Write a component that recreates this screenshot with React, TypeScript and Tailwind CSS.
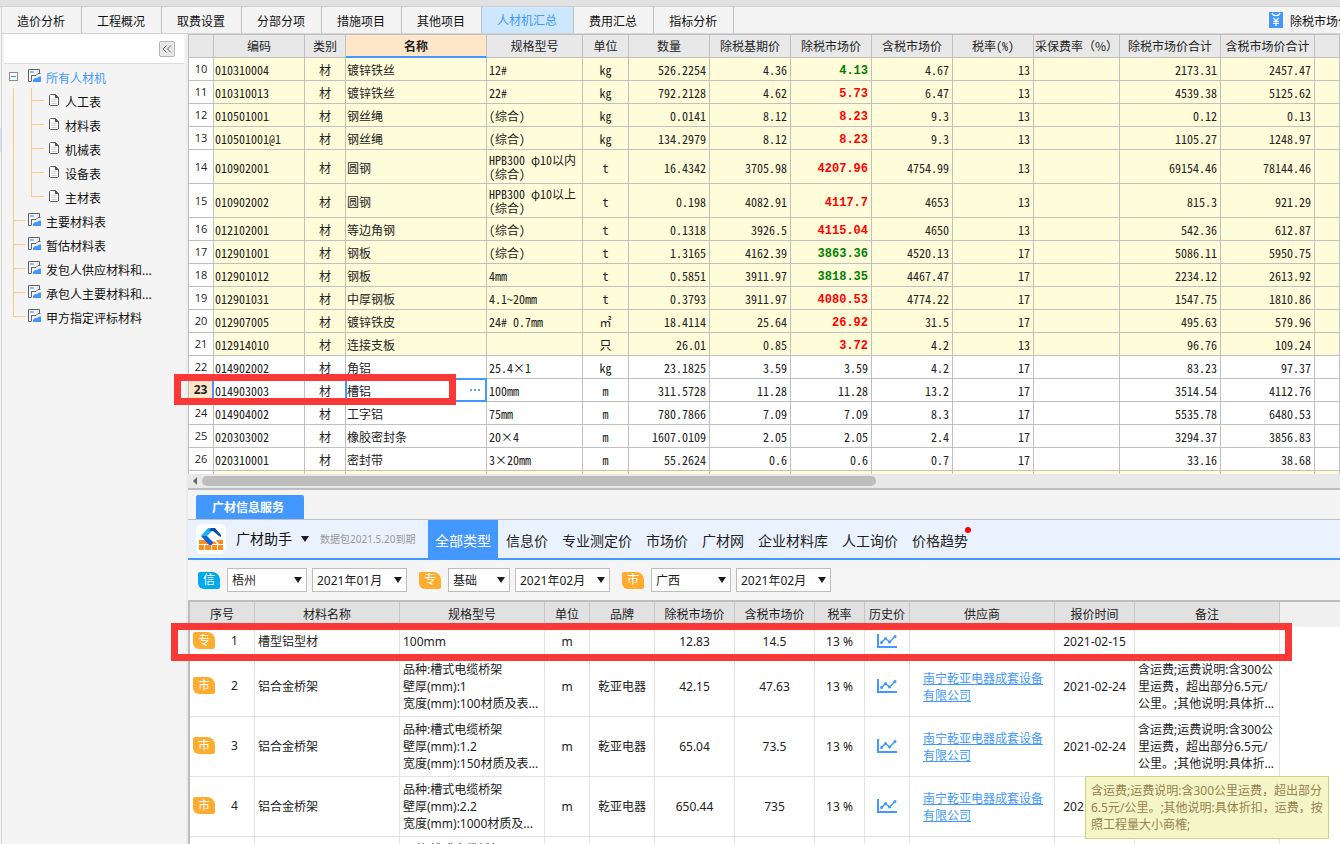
import type { ReactNode } from 'react'

const TABS = ['造价分析', '工程概况', '取费设置', '分部分项', '措施项目', '其他项目', '人材机汇总', '费用汇总', '指标分析']

const SUB_ITEMS = ['人工表', '材料表', '机械表', '设备表', '主材表']
const TREE_ITEMS = ['主要材料表', '暂估材料表', '发包人供应材料和...', '承包人主要材料和...', '甲方指定评标材料']

type Trend = 'up' | 'down' | ''

interface Material {
  no: number
  code: string
  name: string
  spec: string
  unit: string
  qty: string
  base: string
  market: string
  trend: Trend
  taxed: string
  rate: string
  total: string
  taxedTotal: string
}

function material(
  no: number, code: string, name: string, spec: string, unit: string, qty: string, base: string,
  market: string, trend: Trend, taxed: string, rate: string, total: string, taxedTotal: string,
): Material {
  return { no, code, name, spec, unit, qty, base, market, trend, taxed, rate, total, taxedTotal }
}

const MATERIALS: Material[] = [
  material(10, '010310004', '镀锌铁丝', '12#', 'kg', '526.2254', '4.36', '4.13', 'down', '4.67', '13', '2173.31', '2457.47'),
  material(11, '010310013', '镀锌铁丝', '22#', 'kg', '792.2128', '4.62', '5.73', 'up', '6.47', '13', '4539.38', '5125.62'),
  material(12, '010501001', '钢丝绳', '(综合)', 'kg', '0.0141', '8.12', '8.23', 'up', '9.3', '13', '0.12', '0.13'),
  material(13, '010501001@1', '钢丝绳', '(综合)', 'kg', '134.2979', '8.12', '8.23', 'up', '9.3', '13', '1105.27', '1248.97'),
  material(14, '010902001', '圆钢', 'HPB300 φ10以内\n(综合)', 't', '16.4342', '3705.98', '4207.96', 'up', '4754.99', '13', '69154.46', '78144.46'),
  material(15, '010902002', '圆钢', 'HPB300 φ10以上\n(综合)', 't', '0.198', '4082.91', '4117.7', 'up', '4653', '13', '815.3', '921.29'),
  material(16, '012102001', '等边角钢', '(综合)', 't', '0.1318', '3926.5', '4115.04', 'up', '4650', '13', '542.36', '612.87'),
  material(17, '012901001', '钢板', '(综合)', 't', '1.3165', '4162.39', '3863.36', 'down', '4520.13', '17', '5086.11', '5950.75'),
  material(18, '012901012', '钢板', '4mm', 't', '0.5851', '3911.97', '3818.35', 'down', '4467.47', '17', '2234.12', '2613.92'),
  material(19, '012901031', '中厚钢板', '4.1~20mm', 't', '0.3793', '3911.97', '4080.53', 'up', '4774.22', '17', '1547.75', '1810.86'),
  material(20, '012907005', '镀锌铁皮', '24# 0.7mm', '㎡', '18.4114', '25.64', '26.92', 'up', '31.5', '17', '495.63', '579.96'),
  material(21, '012914010', '连接支板', '', '只', '26.01', '0.85', '3.72', 'up', '4.2', '13', '96.76', '109.24'),
  material(22, '014902002', '角铝', '25.4×1', 'kg', '23.1825', '3.59', '3.59', '', '4.2', '17', '83.23', '97.37'),
  material(23, '014903003', '槽铝', '100mm', 'm', '311.5728', '11.28', '11.28', '', '13.2', '17', '3514.54', '4112.76'),
  material(24, '014904002', '工字铝', '75mm', 'm', '780.7866', '7.09', '7.09', '', '8.3', '17', '5535.78', '6480.53'),
  material(25, '020303002', '橡胶密封条', '20×4', 'm', '1607.0109', '2.05', '2.05', '', '2.4', '17', '3294.37', '3856.83'),
  material(26, '020310001', '密封带', '3×20mm', 'm', '55.2624', '0.6', '0.6', '', '0.7', '17', '33.16', '38.68'),
]

const SELECTED_NO = 23

const SERVICE_TABS = ['全部类型', '信息价', '专业测定价', '市场价', '广材网', '企业材料库', '人工询价', '价格趋势']

const SUPPLIER = '南宁乾亚电器成套设备有限公司'
const NOTE = ['含运费;运费说明:含300公', '里运费，超出部分6.5元/', '公里。;其他说明:具体折...']

const QUOTES = [
  { no: 1, tag: '专', name: '槽型铝型材', spec: ['100mm'], brand: '', price: '12.83', taxed: '14.5', supplier: '', date: '2021-02-15', note: [] },
  { no: 2, tag: '市', name: '铝合金桥架', spec: ['品种:槽式电缆桥架', '壁厚(mm):1', '宽度(mm):100材质及表...'], brand: '乾亚电器', price: '42.15', taxed: '47.63', supplier: SUPPLIER, date: '2021-02-24', note: NOTE },
  { no: 3, tag: '市', name: '铝合金桥架', spec: ['品种:槽式电缆桥架', '壁厚(mm):1.2', '宽度(mm):150材质及表...'], brand: '乾亚电器', price: '65.04', taxed: '73.5', supplier: SUPPLIER, date: '2021-02-24', note: NOTE },
  { no: 4, tag: '市', name: '铝合金桥架', spec: ['品种:槽式电缆桥架', '壁厚(mm):2.2', '宽度(mm):1000材质及...'], brand: '乾亚电器', price: '650.44', taxed: '735', supplier: SUPPLIER, date: '2021-02-24', note: [] },
]

function SheetIcon() {
  return (
    <svg width="13" height="14" viewBox="0 0 13 14" fill="none" className="shrink-0">
      <path d="M11.500 4V.500H.500v12H3" stroke="#5c6068" />
      <path d="M2 2h4v2H2z" fill="#8fc3fb" />
      <path d="M12.500 4.500H10l-2 2H3.500v6" stroke="#5c6068" />
      <path d="M5 13v-2l2-2h2l2-1.500h2V13z" fill="#4398ff" />
    </svg>
  )
}

function PageIcon() {
  return (
    <svg width="10" height="12" viewBox="0 0 10 12" fill="none" className="shrink-0">
      <path d="M1.500.500h5l3 3v7l-1 1h-7l-1-1v-9z" fill="#fff" stroke="#55585e" />
      <path d="M6 0v4h4z" fill="#55585e" />
      <path d="M2.500 5.500h5M2.500 7.500h5M2.500 9.500h5" stroke="#c9c9c9" />
    </svg>
  )
}

function ChartIcon() {
  return (
    <svg width="20" height="15" viewBox="0 0 20 15" fill="none" stroke="#4398ff">
      <path d="M1 0v13h19" strokeWidth="2" />
      <path d="M4.500 8.500l4-4 4 3.500 5.500-5.500" strokeWidth="1.500" />
      <g fill="#4398ff" stroke="none">
        <circle cx="4.500" cy="8.500" r="1.500" />
        <circle cx="8.500" cy="4.500" r="1.500" />
        <circle cx="12.500" cy="8" r="1.500" />
        <circle cx="18" cy="2.500" r="1.500" />
      </g>
    </svg>
  )
}

function Logo() {
  return (
    <svg width="30" height="30" viewBox="0 0 30 30" className="shrink-0 rounded-md bg-white">
      <path d="M3 16h6l4 4H3zM15 20l3-3 3 3zM20 16h7v4h-4z" fill="#ff8a1e" />
      <path d="M3 21h5v5H3zM9 21h6v5H9zM16 21h5v5h-5zM22 21h5v5h-5z" fill="#ff8a1e" />
      <path d="M12 4h7l-3 3-5 5H5z" fill="#1fb0fa" />
      <path d="M5 12h6l6 6-1 3h-3z" fill="#0c62d8" />
      <path d="M15 4h4l6 7v2l-2-1-6-5h-4z" fill="#0a4cab" />
    </svg>
  )
}

function Caret() {
  return (
    <svg width="8" height="6" viewBox="0 0 8 6" className="shrink-0">
      <path d="M0 0h8L4 6z" fill="#1c1c1c" />
    </svg>
  )
}

function Badge({ label, color = 'bg-[#ffab2e]' }: { label: string; color?: string }) {
  return (
    <span className={`flex h-[17px] w-[22px] shrink-0 items-center justify-center rounded-tl-xs rounded-tr-lg rounded-br-xs rounded-bl-md text-xs leading-none text-white ${color}`}>
      {label}
    </span>
  )
}

function Picker({ label, value, width }: { label: string; value: string; width: string }) {
  return (
    <span className={`relative flex items-center ${width}`}>
      <select aria-label={label} className="h-6 w-full appearance-none border border-[#bdbdbd] bg-white pt-px pl-1 text-xs text-[#1c1c1c]">
        <option>{value}</option>
      </select>
      <span className="pointer-events-none absolute right-[5px]">
        <Caret />
      </span>
    </span>
  )
}

function Branch({ last = false, children }: { last?: boolean; children: ReactNode }) {
  return (
    <li className="flex h-6 items-center">
      <span className="flex w-[13px] shrink-0 flex-col self-stretch">
        <span className="h-[13px] border-b border-l border-[#ffc880]" />
        {!last && <span className="flex-1 border-l border-[#ffc880]" />}
      </span>
      {children}
    </li>
  )
}

function Sidebar() {
  return (
    <aside className="w-[186px] shrink-0 border-r-2 border-[#ececec] bg-[#f4f4f4]">
      <div className="mx-[2px] flex h-[30px] items-center justify-end border-b border-[#dcdcdc] bg-white pr-[9px]">
        <button aria-label="收起" className="flex size-4 items-center justify-center rounded-xs border border-[#b5b5b5] bg-[#e8e8e8]">
          <svg width="10" height="8" viewBox="0 0 10 8" fill="none" stroke="#666">
            <path d="M4.500.500L1 4l3.500 3.500M9 .500L5.500 4 9 7.500" />
          </svg>
        </button>
      </div>
      <div className="flex h-6 items-center pl-[7px]">
        <button aria-label="折叠" className="flex size-[9px] items-center justify-center border border-[#8c8c8c] bg-white">
          <span className="h-px w-[5px] bg-[#2aa0d8]" />
        </button>
        <span className="ml-[10px]">
          <SheetIcon />
        </span>
        <a href="#all" className="ml-[5px] pt-[6px] text-[#4398ff]">所有人材机</a>
      </div>
      <ul className="pl-[11px]">
        <li className="border-l border-[#ffc880] pl-[17px]">
          <ul>
            {SUB_ITEMS.map((item, i) => (
              <Branch key={item} last={i === SUB_ITEMS.length - 1}>
                <span className="ml-[5px]">
                  <PageIcon />
                </span>
                <a href="#sheet" className="ml-[6px] pt-[6px]">{item}</a>
              </Branch>
            ))}
          </ul>
        </li>
        {TREE_ITEMS.map((item, i) => (
          <Branch key={item} last={i === TREE_ITEMS.length - 1}>
            <span className="ml-[2px]">
              <SheetIcon />
            </span>
            <a href="#sheet" className="ml-[5px] pt-[6px] whitespace-nowrap">{item}</a>
          </Branch>
        ))}
      </ul>
    </aside>
  )
}

const headCell = 'h-6 border-t border-r border-b border-[#c0c0c0] bg-[#e8e8e8] p-0 text-center font-normal'

function MaterialTable() {
  return (
    <table className="w-full table-fixed border-separate border-spacing-0 border-l border-[#c0c0c0] font-['Noto_Sans_CJK_SC',sans-serif] leading-[14px] whitespace-nowrap text-[#222] [font-feature-settings:'hwid']">
      <colgroup>
        <col className="w-[25px]" />
        <col className="w-[91px]" />
        <col className="w-[41px]" />
        <col className="w-[141px]" />
        <col className="w-[96px]" />
        <col className="w-[46px]" />
        <col className="w-[81px]" />
        <col className="w-[81px]" />
        <col className="w-[81px]" />
        <col className="w-[81px]" />
        <col className="w-[81px]" />
        <col className="w-[86px]" />
        <col className="w-[101px]" />
        <col className="w-[94px]" />
        <col />
      </colgroup>
      <thead>
        <tr>
          <th className={headCell} />
          <th className={headCell}>编码</th>
          <th className={headCell}>类别</th>
          <th className="h-6 border-t border-r border-b-2 border-t-[#c0c0c0] border-r-[#c0c0c0] border-b-[#4398ff] bg-[#ffe6c8] p-0 text-center font-bold">名称</th>
          <th className={headCell}>规格型号</th>
          <th className={headCell}>单位</th>
          <th className={headCell}>数量</th>
          <th className={headCell}>除税基期价</th>
          <th className={headCell}>除税市场价</th>
          <th className={headCell}>含税市场价</th>
          <th className={headCell}>税率(%)</th>
          <th className={`${headCell} [font-feature-settings:normal]`}>采保费率（%）</th>
          <th className={headCell}>除税市场价合计</th>
          <th className={headCell}>含税市场价合计</th>
          <th className={headCell} />
        </tr>
      </thead>
      <tbody>
        {MATERIALS.map((m) => {
          const bg = m.no < 22 ? 'bg-[#fffcd9]' : 'bg-white'
          const twoLines = m.spec.includes('\n')
          const base = `border-r border-b border-[#c0c0c0] ${bg}`
          const cell = `${base} px-0 pt-[2px] pb-0`
          const left = `${base} pt-[2px] pr-0 pb-0 pl-px text-left whitespace-pre`
          const right = `${base} pt-[2px] pr-[3px] pb-0 pl-0 text-right`
          const tone = m.trend === 'up' ? 'text-[#ff0000]' : 'text-[#008000]'
          const selected = m.no === SELECTED_NO
          return (
            <tr key={m.no} className={twoLines ? 'h-[34px]' : 'h-[23px]'}>
              <th
                className={
                  selected
                    ? "border-r-2 border-b border-r-[#4398ff] border-b-[#c0c0c0] bg-[#ffe6c8] p-0 font-['Open_Sans',sans-serif] font-bold"
                    : "border-r border-b border-[#c0c0c0] bg-white p-0 font-['Open_Sans',sans-serif] text-[11px] font-normal"
                }
              >
                {m.no}
              </th>
              <td className={left}>{m.code}</td>
              <td className={`${cell} text-center`}>材</td>
              {selected ? (
                <td className={`${left} relative`}>
                  {m.name}
                  <button aria-label="选择" className="absolute -inset-px flex items-center justify-end border-2 border-[#4398ff] pr-[3px]">
                    <svg width="12" height="2" viewBox="0 0 12 2" fill="#6aa3dc">
                      <path d="M0 0h2v2H0zM4 0h2v2H4zM8 0h2v2H8z" />
                    </svg>
                  </button>
                </td>
              ) : (
                <td className={left}>{m.name}</td>
              )}
              <td className={twoLines ? `${base} py-0 pr-0 pl-[2px] text-left whitespace-pre` : `${base} pt-[2px] pr-0 pb-0 pl-[2px] text-left whitespace-pre`}>{m.spec}</td>
              <td className={`${cell} text-center`}>{m.unit}</td>
              <td className={right}>{m.qty}</td>
              <td className={right}>{m.base}</td>
              <td className={right}>
                {m.trend ? <b className={`font-['Liberation_Mono',monospace] ${tone}`}>{m.market}</b> : m.market}
              </td>
              <td className={right}>{m.taxed}</td>
              <td className={right}>{m.rate}</td>
              <td className={cell} />
              <td className={right}>{m.total}</td>
              <td className={right}>{m.taxedTotal}</td>
              <td className={cell} />
            </tr>
          )
        })}
        <tr className="h-[23px]">
          <th className="border-r border-[#c0c0c0] bg-white" />
          {Array.from({ length: 14 }, (_, i) => (
            <td key={i} className="border-r border-[#c0c0c0] bg-[#fffcd9]" />
          ))}
        </tr>
      </tbody>
    </table>
  )
}

const quoteHead = 'h-[25px] border-r border-[#c6c6c6] bg-[#e1e1e1] p-0 text-center font-normal'
const quoteCell = 'border-r border-b border-[#e3e3e3] p-0 text-center'

function QuoteTable() {
  return (
    <table className="w-full table-fixed border-separate border-spacing-0 border-t-2 border-l-2 border-[#bdbdbd] bg-white leading-[17px] whitespace-nowrap text-[#222]">
      <colgroup>
        <col className="w-[65px]" />
        <col className="w-[145px]" />
        <col className="w-[145px]" />
        <col className="w-[45px]" />
        <col className="w-[65px]" />
        <col className="w-[80px]" />
        <col className="w-[80px]" />
        <col className="w-[50px]" />
        <col className="w-[45px]" />
        <col className="w-[145px]" />
        <col className="w-[80px]" />
        <col className="w-[145px]" />
        <col />
      </colgroup>
      <thead>
        <tr>
          {['序号', '材料名称', '规格型号', '单位', '品牌', '除税市场价', '含税市场价', '税率', '历史价', '供应商', '报价时间', '备注'].map((h) => (
            <th key={h} className={quoteHead}>{h}</th>
          ))}
          <th className="bg-[#f0f0f0] p-0" />
        </tr>
      </thead>
      <tbody>
        {QUOTES.map((q) => (
          <tr key={q.no} className={q.no === 1 ? 'h-[30px]' : 'h-[60px]'}>
            <td className={quoteCell}>
              <div className="flex items-center pb-[2px] pl-[3px]">
                <Badge label={q.tag} />
                <span className="flex-1">{q.no}</span>
              </div>
            </td>
            <td className={`${quoteCell} pl-[3px] text-left`}>{q.name}</td>
            <td className={q.no === 1 ? `${quoteCell} pl-[3px] text-left` : `${quoteCell} pt-1 pl-[3px] text-left align-top`}>
              {q.spec.map((line) => (
                <div key={line}>{line}</div>
              ))}
            </td>
            <td className={quoteCell}>m</td>
            <td className={quoteCell}>{q.brand}</td>
            <td className={quoteCell}>{q.price}</td>
            <td className={quoteCell}>{q.taxed}</td>
            <td className={quoteCell}>13 %</td>
            <td className={quoteCell}>
              <button aria-label="历史价" className="block pl-3">
                <ChartIcon />
              </button>
            </td>
            <td className={`${quoteCell} pl-[13px] text-left whitespace-normal`}>
              {q.supplier && (
                <a href="#supplier" className="block w-[120px] text-[#4398ff] underline">{q.supplier}</a>
              )}
            </td>
            <td className={quoteCell}>{q.date}</td>
            <td className={`${quoteCell} pt-1 pl-[3px] text-left align-top`}>
              {q.note.map((line) => (
                <div key={line}>{line}</div>
              ))}
            </td>
            <td />
          </tr>
        ))}
        <tr className="h-[60px]">
          <td className={quoteCell} />
          <td className={quoteCell} />
          <td className={`${quoteCell} pt-1 pl-[3px] text-left align-top`}>品种:槽式电缆桥架</td>
          {Array.from({ length: 9 }, (_, i) => (
            <td key={i} className={quoteCell} />
          ))}
          <td />
        </tr>
      </tbody>
    </table>
  )
}

function ServicePanel() {
  return (
    <section className="flex min-h-0 flex-1 flex-col">
      <div className="flex h-[30px] shrink-0 items-end border-b border-[#c0c0c0] bg-[#f4f4f4] pl-2">
        <button className="h-6 w-[108px] rounded-t-xs bg-[#4398ff] pt-px pr-1 font-bold text-white">广材信息服务</button>
      </div>
      <div className="flex h-10 shrink-0 items-center border-b-2 border-[#4398ff] bg-[#ebf2ff] pl-2 text-sm text-[#222]">
        <Logo />
        <button className="ml-[10px] flex items-center gap-[9px] whitespace-nowrap text-[#111]">
          广材助手
          <Caret />
        </button>
        <span className="ml-[11px] w-[108px] shrink-0 text-[10px] whitespace-nowrap text-[#999]">数据包2021.5.20到期</span>
        <nav className="flex self-stretch">
          {SERVICE_TABS.map((tab, i) => (
            <button
              key={tab}
              className={i === 0 ? 'mr-px bg-[#4398ff] px-[7px] pt-1 whitespace-nowrap text-white' : 'relative px-[7px] pt-1 whitespace-nowrap'}
            >
              {tab}
              {tab === '价格趋势' && <span className="absolute top-[7px] right-[4px] size-[6px] rounded-full bg-[#ff0000]" />}
            </button>
          ))}
        </nav>
      </div>
      <div className="flex h-10 shrink-0 items-center bg-[#f5f5f5] pl-[10px]">
        <Badge label="信" color="bg-[#00a8f0]" />
        <div className="ml-[7px] flex gap-[5px]">
          <Picker label="信息价地区" value="梧州" width="w-[80px]" />
          <Picker label="信息价期次" value="2021年01月" width="w-[95px]" />
        </div>
        <div className="ml-3 flex items-center gap-[7px]">
          <Badge label="专" />
          <div className="flex gap-[5px]">
            <Picker label="测定价类别" value="基础" width="w-[62px]" />
            <Picker label="测定价期次" value="2021年02月" width="w-[95px]" />
          </div>
        </div>
        <div className="ml-3 flex items-center gap-[7px]">
          <Badge label="市" />
          <div className="flex gap-[5px]">
            <Picker label="市场价地区" value="广西" width="w-[80px]" />
            <Picker label="市场价期次" value="2021年02月" width="w-[95px]" />
          </div>
        </div>
      </div>
      <div className="relative min-h-0 flex-1">
        <div className="h-full overflow-hidden bg-white">
          <QuoteTable />
        </div>
        <div className="pointer-events-none absolute top-[23px] -left-[17px] h-[38px] w-[1121px] border-7 border-[#fb3836]" />
        <div role="tooltip" className="absolute top-[176px] right-[11px] w-[244px] border border-[#cfd27c] bg-[#f5f6c8] px-[5px] py-[5px] leading-[17px] whitespace-nowrap text-[#95824f]">
          含运费;运费说明:含300公里运费，超出部分<br />
          6.5元/公里。;其他说明:具体折扣，运费，按<br />
          照工程量大小商榷;
        </div>
      </div>
    </section>
  )
}

export default function App() {
  return (
    <div className="flex h-screen flex-col overflow-hidden bg-[#f4f4f4] font-['Noto_Sans','Noto_Sans_CJK_SC',sans-serif] text-xs text-[#111]">
      <div className="h-[7px] shrink-0 border-b border-[#cfcfcf] bg-[#e1e1e1]" />
      <div className="flex min-h-0 flex-1">
        <div className="w-[2px] shrink-0 border-r border-[#d4d4d4] bg-[#f4f4f4] pt-[121px]">
          <div className="h-6 bg-[#cce6ff]" />
        </div>
        <div className="flex min-w-0 flex-1 flex-col">
          <div className="flex h-[27px] shrink-0 border-b border-[#d4d4d4] bg-[#f4f4f4]">
            <nav className="flex">
              {TABS.map((tab) => (
                <button
                  key={tab}
                  className={
                    tab === '人材机汇总'
                      ? 'border-r border-[#c0c0c0] bg-[#cce7ff] pt-[2px] pr-4 pl-[15px] whitespace-nowrap text-[#4398ff]'
                      : 'border-r border-[#c0c0c0] pt-[3px] pr-4 pl-[15px] whitespace-nowrap'
                  }
                >
                  {tab}
                </button>
              ))}
            </nav>
            <button className="ml-auto flex w-[71px] items-center gap-[7px] overflow-hidden whitespace-nowrap">
              <svg width="14" height="16" viewBox="0 0 14 16" fill="none" className="shrink-0">
                <path d="M0 0h14v16H0z" fill="#4398ff" />
                <path d="M3 1c1 3.500 7 3.500 8 0M4.500 6L7 9l2.500-3M4 9.500h6M4 11.500h6M7 9v5" stroke="#fff" strokeWidth="1.200" />
              </svg>
              <span className="pt-[3px]">除税市场价</span>
            </button>
          </div>
          <div className="flex min-h-0 flex-1">
            <Sidebar />
            <main className="flex min-w-0 flex-1 flex-col">
              <div className="relative h-[440px] shrink-0">
                <div className="h-full overflow-hidden">
                  <MaterialTable />
                </div>
                <div className="pointer-events-none absolute top-[340px] -left-[14px] h-[31px] w-[282px] border-7 border-[#fb3836]" />
              </div>
              <div className="flex h-4 shrink-0 items-center border-b-2 border-[#bdbdbd] bg-[#e8e8e8] pl-1">
                <button aria-label="向左滚动" className="mr-1">
                  <svg width="6" height="8" viewBox="0 0 6 8">
                    <path d="M5 0v8L1 4z" fill="#666" />
                  </svg>
                </button>
                <div className="h-[10px] w-[674px] rounded-full bg-[#bdbdbd]" />
              </div>
              <ServicePanel />
            </main>
          </div>
        </div>
      </div>
    </div>
  )
}
